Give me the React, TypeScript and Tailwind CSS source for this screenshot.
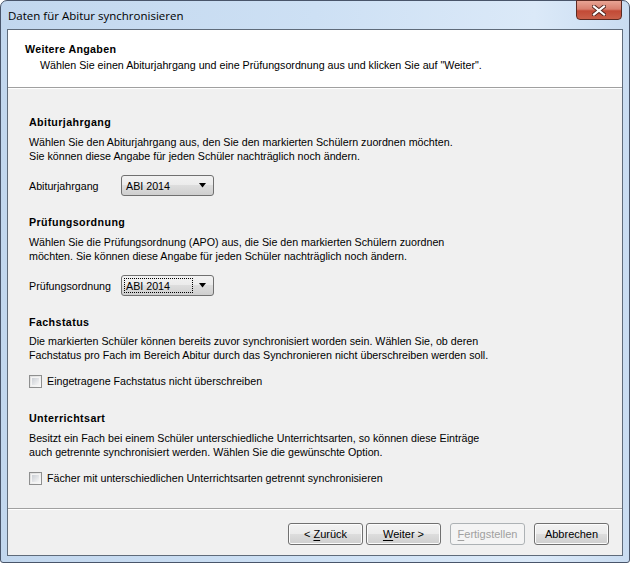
import React from 'react';

const font = { fontFamily: '"Liberation Sans", Arial, sans-serif' };

function Btn({ label, u, rest, pre, disabled }: { label?: string; u?: string; rest?: string; pre?: string; disabled?: boolean }) {
  return (
    <button
      className={
        'w-[75px] h-[22px] rounded-[3px] border text-[11px] leading-[14px] flex items-center justify-center ' +
        (disabled
          ? 'border-[#adb2b5] bg-[#f4f4f4] text-[#a0a0a0]'
          : 'border-[#707070] bg-[linear-gradient(#f2f2f2_0%,#ebebeb_50%,#dddddd_50%,#cfcfcf_100%)] text-black shadow-[inset_0_0_0_1px_#fcfcfc]')
      }
    >
      {label ? (
        label
      ) : (
        <span>
          {pre}
          <span className="underline underline-offset-2">{u}</span>
          {rest}
        </span>
      )}
    </button>
  );
}

function Combo({ focus }: { focus?: boolean }) {
  return (
    <div className="w-[93px] h-[21px] rounded-[3px] border border-[#707070] bg-[linear-gradient(#f2f2f2_0%,#ebebeb_50%,#dddddd_50%,#cfcfcf_100%)] flex items-center pl-[2px] pr-[6px]">
      <span className={'flex-1 h-[15px] flex items-center pl-[1px] ' + (focus ? 'border border-dotted border-black' : 'border border-transparent')}>ABI 2014</span>
      <svg width="8" height="5" viewBox="0 0 8 5" className="ml-[6px]">
        <path d="M0 0H7L3.5 4.5Z" fill="#000" />
      </svg>
    </div>
  );
}

function Check({ text }: { text: string }) {
  return (
    <div className="flex items-center h-[16px]">
      <span className="w-[13px] h-[13px] border border-[#8e8f8f] bg-[linear-gradient(135deg,#dcdcdc,#fbfbfb)] flex items-center justify-center">
        <span className="w-[9px] h-[9px] bg-[linear-gradient(135deg,#cbcfd5,#f6f6f6)] border border-[#f4f4f4]" />
      </span>
      <span className="ml-[5px]">{text}</span>
    </div>
  );
}

export default function App() {
  return (
    <div style={font} className="w-[630px] h-[563px] flex flex-col rounded-t-[7px] rounded-b-[3px] border border-[#49556a] bg-[linear-gradient(90deg,#c2d7ee_0%,#cde0f4_50%,#dbe9f8_85%,#c9dcf1_100%)] text-black">
      <div className="h-[28px] flex justify-between">
        <span className="pl-[7px] pt-[7px] text-[12px] leading-[15px] text-black" style={{ fontFamily: '"Open Sans", "Liberation Sans", sans-serif', fontSize: '11.5px' }}>
          Daten für Abitur synchronisieren
        </span>
        <div className="-mt-px mr-[7px] w-[46px] h-[20px] rounded-b-[4px] border border-[#5c2a22] bg-[linear-gradient(#e8a494_0%,#d8806f_45%,#c24a36_55%,#c9604a_100%)] flex items-center justify-center">
          <svg width="14" height="11" viewBox="0 0 14 11">
            <path d="M2 1.5L12 9.5M12 1.5L2 9.5" stroke="#50241e" strokeWidth="4" strokeLinecap="square" />
            <path d="M2 1.5L12 9.5M12 1.5L2 9.5" stroke="#ffffff" strokeWidth="2.2" strokeLinecap="square" />
          </svg>
        </div>
      </div>
      <div className="flex-1 mx-[6px] mb-[6px] border border-[#5f6b7a] bg-[#f0f0f0] flex flex-col text-[10.7px] leading-[14px]">
        <div className="bg-white h-[58px] pt-[12px] pl-[17px] border-b border-b-[#a0a0a0]">
          <div className="font-bold tracking-[0.3px]">Weitere Angaben</div>
          <div className="pl-[15px] mt-[2px]">Wählen Sie einen Abiturjahrgang und eine Prüfungsordnung aus und klicken Sie auf "Weiter".</div>
        </div>
        <div className="flex-1 border-t border-t-white pl-[21px] pt-[26px] border-b border-b-[#a0a0a0]">
          <div className="font-bold tracking-[0.4px]">Abiturjahrgang</div>
          <div className="mt-[6px]">
            Wählen Sie den Abiturjahrgang aus, den Sie den markierten Schülern zuordnen möchten.
            <br />
            Sie können diese Angabe für jeden Schüler nachträglich noch ändern.
          </div>
          <div className="mt-[12px] flex items-center">
            <span className="w-[92px]">Abiturjahrgang</span>
            <Combo />
          </div>

          <div className="mt-[19px] font-bold tracking-[0.4px]">Prüfungsordnung</div>
          <div className="mt-[6px]">
            Wählen Sie die Prüfungsordnung (APO) aus, die Sie den markierten Schülern zuordnen
            <br />
            möchten. Sie können diese Angabe für jeden Schüler nachträglich noch ändern.
          </div>
          <div className="mt-[12px] flex items-center">
            <span className="w-[92px]">Prüfungsordnung</span>
            <Combo focus />
          </div>

          <div className="mt-[19px] font-bold tracking-[0.4px]">Fachstatus</div>
          <div className="mt-[5px]">
            Die markierten Schüler können bereits zuvor synchronisiert worden sein. Wählen Sie, ob deren
            <br />
            Fachstatus pro Fach im Bereich Abitur durch das Synchronieren nicht überschreiben werden soll.
          </div>
          <div className="mt-[11px]">
            <Check text="Eingetragene Fachstatus nicht überschreiben" />
          </div>

          <div className="mt-[22px] font-bold tracking-[0.4px]">Unterrichtsart</div>
          <div className="mt-[6px]">
            Besitzt ein Fach bei einem Schüler unterschiedliche Unterrichtsarten, so können diese Einträge
            <br />
            auch getrennte synchronisiert werden. Wählen Sie die gewünschte Option.
          </div>
          <div className="mt-[11px]">
            <Check text="Fächer mit unterschiedlichen Unterrichtsarten getrennt synchronisieren" />
          </div>
        </div>
        <div className="h-[46px] border-t border-t-white flex justify-end items-start pt-[13px] pr-[13px]">
          <Btn pre="< " u="Z" rest="urück" />
          <div className="w-[3px]" />
          <Btn u="W" rest="eiter >" />
          <div className="w-[9px]" />
          <Btn pre="" u="F" rest="ertigstellen" disabled />
          <div className="w-[9px]" />
          <Btn label="Abbrechen" />
        </div>
      </div>
    </div>
  );
}
